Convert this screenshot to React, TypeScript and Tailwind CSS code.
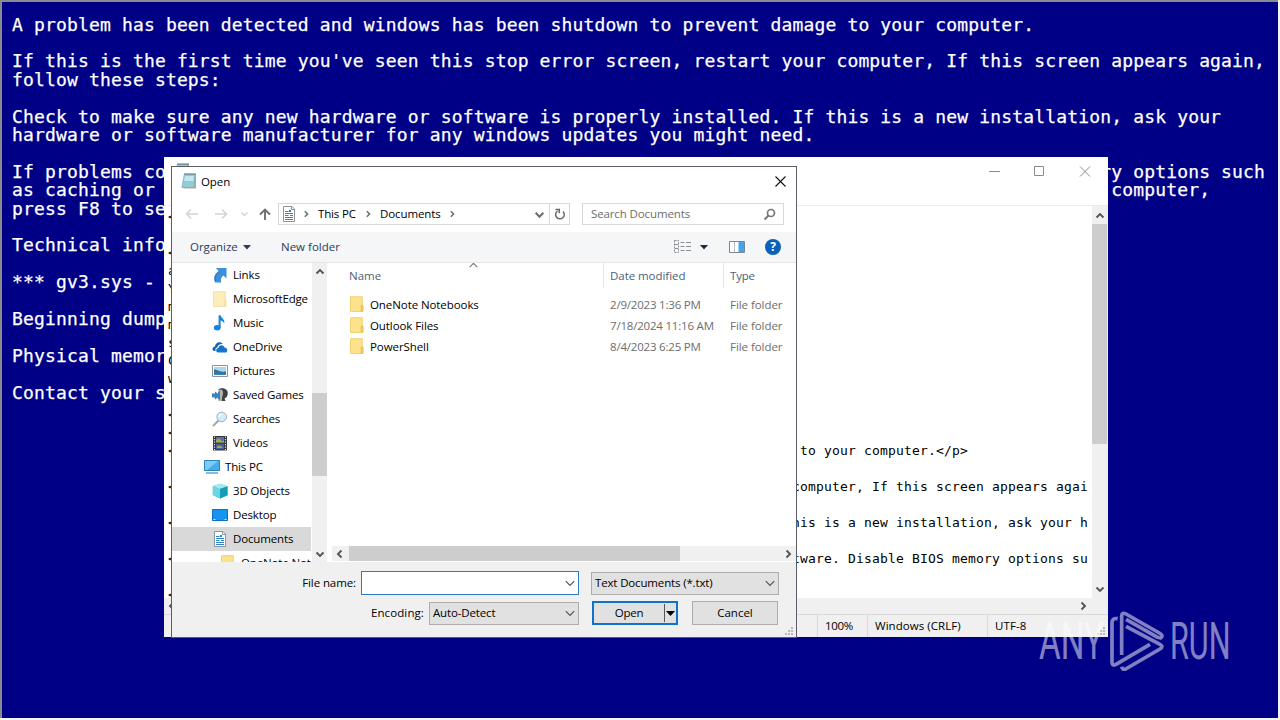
import type { ReactNode } from 'react';
import clsx from 'clsx';

const stopLines = [
  'A problem has been detected and windows has been shutdown to prevent damage to your computer.',
  '',
  "If this is the first time you've seen this stop error screen, restart your computer, If this screen appears again,",
  'follow these steps:',
  '',
  'Check to make sure any new hardware or software is properly installed. If this is a new installation, ask your',
  'hardware or software manufacturer for any windows updates you might need.',
  '',
  'If problems continue, disable or remove any newly installed hardware or software. Disable BIOS memory options such',
  'as caching or shadowing. If you need to use Safe Mode to remove or disable components, restart your computer,',
  'press F8 to select',
  '',
  'Technical infor',
  '',
  '*** gv3.sys - A',
  '',
  'Beginning dump ',
  '',
  'Physical memory',
  '',
  'Contact your sy',
];

const notepadLines = [
  '<',
  '',
  '<',
  'a',
  'Y',
  'm',
  'm',
  's',
  'C',
  'w',
  '',
  '<',
  '<',
  '<p>A problem has been detected and windows has been shutdown to prevent damage to your computer.</p>',
  '',
  "<p>If this is the first time you've seen this stop error screen, restart your computer, If this screen appears agai",
  '',
  '<p>Check to make sure any new hardware or software is properly installed. If this is a new installation, ask your h',
  '',
  '<p>If problems continue, disable or remove any newly installed hardware or software. Disable BIOS memory options su',
  '',
  '<',
];

type IconProps = { className?: string };

function Svg({ children, className, size = 16 }: IconProps & { children: ReactNode; size?: number }) {
  return (
    <svg width={size} height={size} viewBox="0 0 16 16" fill="none" className={clsx('shrink-0', className)}>
      {children}
    </svg>
  );
}

function NotepadIcon({ className }: IconProps) {
  return (
    <Svg className={className}>
      <path d="M4 1.5h11v14H2.500z" fill="#b9a98c" />
      <path d="M3.300 1.200h10.900L13 14.500H.8z" fill="#8fcbd8" stroke="#6fa9b6" strokeWidth=".6" />
      <path d="M4 3h8.800L12.200 8H3z" fill="#c3e8ee" />
      <path d="M3.500 1h11" stroke="#4c5f66" strokeWidth="1.600" strokeDasharray="1 1" />
    </Svg>
  );
}

function DocumentIcon() {
  return (
    <Svg>
      <path d="M2.500.5h8.500l2.500 2.500v12.500h-11z" fill="#fff" stroke="#8b959c" />
      <path d="M10.500.5V3.500h3" stroke="#8b959c" />
      <path d="M4 5.500h3.500M4 7.500h8M4 9.500h3.500M4 11.500h8M4 13.500h8" stroke="#2b87c8" />
      <path d="M8 4h2v2H8zM9 9h3v1H9z" fill="#2b87c8" />
    </Svg>
  );
}

function FolderIcon({ pale, className }: { pale?: boolean; className?: string }) {
  return (
    <Svg className={className}>
      <path d="M1.500.7h11.800v14.800H1.500z" fill={pale ? '#fbeebb' : '#fde28c'} stroke={pale ? '#eedc9e' : '#efca62'} strokeWidth=".8" />
      <path d="M12.200 9.200h1.900v6h-1.900z" fill={pale ? '#f8e6a5' : '#f7d36b'} stroke={pale ? '#eedc9e' : '#dfb348'} strokeWidth=".7" />
    </Svg>
  );
}

function LinkIcon() {
  return (
    <Svg>
      <path d="M4 1h10.500v10.500l-3-3C9 10 8.600 12 9.200 15.500H3.200C.8 11 2.500 7 6.600 4z" fill="#3d8edb" />
      <path d="M3.900 15C1.800 10.500 4 7 7.500 4.700" stroke="#2a6fb5" strokeWidth=".7" />
    </Svg>
  );
}

function MusicIcon() {
  return (
    <Svg>
      <ellipse cx="5.200" cy="12.800" rx="3.400" ry="2.700" fill="#1683de" />
      <path d="M6.600.3h2c.3 2.800 4.800 3.700 3.600 8.500-.6-2-1.800-2.800-3.600-3.200V13h-2z" fill="#1683de" />
    </Svg>
  );
}

function OneDriveIcon() {
  return (
    <Svg>
      <path d="M1 11.500c-1.300-2 .2-4 2-4C3.200 4 8 1.500 11 5.200 7.800 4.700 5.600 6.500 5.300 8.600c-1.900.4-2.200 2-1.600 3.400H2z" fill="#1567b8" />
      <path d="M4.700 12.900c-1.200-1.900.1-3.800 1.700-3.800.4-3.500 5.300-3.700 6-.6 2.900-.2 3.800 3.600 1.900 4.900H6z" fill="#1575cc" />
    </Svg>
  );
}

function PicturesIcon() {
  return (
    <Svg>
      <path d="M.5 2.500h15v11H.5z" fill="#fff" stroke="#8b9298" />
      <path d="M2 4h12v8H2z" fill="#a9d6f2" />
      <path d="M2 6.500c3 0 4 1.500 7 2s3 0 5 0V12H2z" fill="#3d6f91" />
      <path d="M2 10.500c4-1 7 1 12 0V12H2z" fill="#2b86c1" />
    </Svg>
  );
}

function GamesIcon() {
  return (
    <Svg>
      <path d="M6.500 2.500C9 .3 15.500 1 15.800 6c.2 3-1.800 5-3.300 5.500l1 2.500H6.500l2-4z" fill="#3b4142" />
      <path d="M7 3C9 1.500 11.500 3 11 6.500S9.500 11 10 14H6.600l1.700-4z" fill="#b3b5ad" />
      <path d="M0 6.500h3v-2l3 2.200V4.500h2v8H6v-2L3 12.500v-2H0z" fill="#3d82b8" />
    </Svg>
  );
}

function SearchIcon() {
  return (
    <Svg>
      <path d="M6.500 9.500L1.500 14.500" stroke="#a5a9ac" strokeWidth="2" strokeLinecap="round" />
      <circle cx="9.700" cy="5.900" r="4.800" fill="#d3ebf9" stroke="#9fb3c1" />
      <path d="M7 6c.3-2 1.500-2.700 3-2.700" stroke="#fff" strokeWidth="1.300" />
    </Svg>
  );
}

function VideosIcon() {
  return (
    <Svg>
      <path d="M1 1h14v14.500H1z" fill="#30343b" />
      <path d="M4 2h8v5.500H4z" fill="#5872a0" />
      <path d="M4 8.800h8v5.500H4z" fill="#4760a0" />
      <path d="M4 5l3-1.500 3 3 2-1v2H4zM5 11.500l3-1 3 2.500H5z" fill="#b5a64c" />
      <path d="M2.500 1.500v14M13.500 1.500v14" stroke="#e3e5e8" strokeWidth="1.200" strokeDasharray="1.300 1.200" />
    </Svg>
  );
}

function ComputerIcon() {
  return (
    <Svg>
      <path d="M.5 1.500h15v10H.5z" fill="#45aeea" stroke="#2784b7" />
      <path d="M1 2h13L3 11H1z" fill="#7ccbf5" />
      <path d="M2 14h12" stroke="#4797bd" strokeWidth="1.300" />
    </Svg>
  );
}

function CubeIcon() {
  return (
    <Svg>
      <path d="M8 .8l7.500 2.500v9L8 15.500.8 12V3.300z" fill="#2ab8d0" />
      <path d="M8 .8l7.500 2.500L8 6 .8 3.300z" fill="#a5e8ef" />
      <path d="M.8 3.300L8 6v9.500L.8 12z" fill="#6bd6df" />
      <path d="M8 6l7.500-2.700v9L8 15.500z" fill="#139eb7" />
    </Svg>
  );
}

function DesktopIcon() {
  return (
    <Svg>
      <path d="M.5 2.500h15v11H.5z" fill="#1594f0" stroke="#0d6fc1" />
      <path d="M1.500 12.500h2M12.500 12.500h2" stroke="#bfe3ff" />
    </Svg>
  );
}

type Direction = 'up' | 'down' | 'left' | 'right';

const chevrons: Record<Direction, string> = {
  up: 'M1.500 6.500L5 3l3.500 3.500',
  down: 'M1.500 3.500L5 7l3.500-3.500',
  left: 'M6.500 1.500L3 5l3.500 3.500',
  right: 'M3.500 1.500L7 5 3.500 8.500',
};

function Chevron({ dir, size = 10, width = 1.9, className = 'text-[#555]' }: { dir: Direction; size?: number; width?: number; className?: string }) {
  return (
    <svg width={size} height={size} viewBox="0 0 10 10" fill="none" className={clsx('shrink-0', className)}>
      <path d={chevrons[dir]} stroke="currentColor" strokeWidth={width} />
    </svg>
  );
}

function Grip() {
  return (
    <svg width="9" height="9" viewBox="0 0 9 9" fill="#b9b9b9" className="absolute bottom-px right-[2px]">
      <path d="M6 0h2v2H6zM3 3h2v2H3zM6 3h2v2H6zM0 6h2v2H0zM3 6h2v2H3zM6 6h2v2H6z" />
    </svg>
  );
}

const treeItems = [
  { label: 'Links', icon: <LinkIcon />, level: 1 },
  { label: 'MicrosoftEdge', icon: <FolderIcon pale />, level: 1 },
  { label: 'Music', icon: <MusicIcon />, level: 1 },
  { label: 'OneDrive', icon: <OneDriveIcon />, level: 1 },
  { label: 'Pictures', icon: <PicturesIcon />, level: 1 },
  { label: 'Saved Games', icon: <GamesIcon />, level: 1 },
  { label: 'Searches', icon: <SearchIcon />, level: 1 },
  { label: 'Videos', icon: <VideosIcon />, level: 1 },
  { label: 'This PC', icon: <ComputerIcon />, level: 0 },
  { label: '3D Objects', icon: <CubeIcon />, level: 1 },
  { label: 'Desktop', icon: <DesktopIcon />, level: 1 },
  { label: 'Documents', icon: <DocumentIcon />, level: 1, selected: true },
  { label: 'OneNote Notebooks', icon: <FolderIcon />, level: 2 },
];

const files = [
  { name: 'OneNote Notebooks', date: '2/9/2023 1:36 PM' },
  { name: 'Outlook Files', date: '7/18/2024 11:16 AM' },
  { name: 'PowerShell', date: '8/4/2023 6:25 PM' },
];

function NotepadWindow() {
  return (
    <div className="absolute left-[164px] top-[157px] flex h-[480px] w-[944px] flex-col bg-white">
      <div className="flex h-[48px] shrink-0 items-start justify-between">
        <NotepadIcon className="ml-[10px] mt-[6px]" />
        <svg width="110" height="28" viewBox="0 0 110 28" fill="none" stroke="#8b8b8b" className="mr-[9px]">
          <path d="M0 14.500h11M45.500 9.500h9v9h-9zM91 9.500l10 10M101 9.500l-10 10" />
        </svg>
      </div>
      <div className="flex min-h-0 flex-1 border-t border-[#ececec]">
        <div className="flex min-w-0 flex-1 flex-col">
          <pre className="h-[392px] overflow-hidden pl-[4px] pt-[1.5px] font-['DejaVu_Sans_Mono',monospace] text-[13px] leading-[18px] tracking-[0.174px] text-black">
            {notepadLines.join('\n')}
          </pre>
          <div className="flex flex-1 items-center justify-between bg-[#f0f0f0] pl-[3px] pr-[4px]">
            <Chevron dir="left" />
            <Chevron dir="right" />
          </div>
        </div>
        <div className="flex w-[16px] flex-col items-center bg-[#f0f0f0] pr-px">
          <div className="flex h-[18px] items-center pt-[2px]">
            <Chevron dir="up" />
          </div>
          <div className="h-[220px] w-[15px] bg-[#cdcdcd]" />
          <Chevron dir="down" className="mt-[140px] text-[#555]" />
        </div>
      </div>
      <div className="relative flex h-[23px] shrink-0 items-center justify-end border-t border-[#d9d9d9] bg-[#f0f0f0] text-[11.5px] text-black">
        <span className="flex h-full w-[50px] items-center border-l border-[#d9d9d9] pl-[7px] tracking-[-0.3px]">100%</span>
        <span className="flex h-full w-[120px] items-center border-l border-[#d9d9d9] pl-[7px] tracking-[0.05px]">Windows (CRLF)</span>
        <span className="flex h-full w-[121px] items-center border-l border-[#d9d9d9] pl-[7px] tracking-[0.1px]">UTF-8</span>
        <Grip />
      </div>
    </div>
  );
}

function AddressRow() {
  return (
    <div className="flex h-[22px] shrink-0 items-center">
      <svg width="106" height="22" viewBox="0 0 106 22" fill="none" className="shrink-0">
        <path d="M14 11h12M19 6.500L14.500 11l4.500 4.500M43 11h12M50 6.500l4.500 4.500-4.500 4.500M69.500 9.500l3 3 3-3" stroke="#d3d3d3" strokeWidth="1.500" />
        <path d="M93 17V6.500M88 11.500l5-5 5 5" stroke="#707070" strokeWidth="1.900" />
      </svg>
      <div className="flex h-[22px] w-[292px] items-center border border-[#d9d9d9] pl-[2px] text-black">
        <DocumentIcon />
        <Chevron dir="right" size={8} className="ml-[5px] text-[#6d6d6d]" />
        <span className="ml-[8px] w-[40px] tracking-[-0.15px]">This PC</span>
        <Chevron dir="right" size={8} className="ml-[6px] text-[#6d6d6d]" />
        <span className="ml-[8px] w-[63px] tracking-[-0.1px]">Documents</span>
        <Chevron dir="right" size={8} className="ml-[5px] text-[#6d6d6d]" />
        <Chevron dir="down" size={11} className="ml-auto mr-[4px] mt-px text-[#6d6d6d]" />
        <div className="flex h-full w-[20px] items-center justify-center border-l border-[#d9d9d9]">
          <svg width="14" height="14" viewBox="0 0 14 14" fill="none" stroke="#666" strokeWidth="1.500">
            <path d="M4.500 4A4.300 4.300 0 1 0 10 4.500" />
            <path d="M2.500 2.500h3.800v3.800" />
          </svg>
        </div>
      </div>
      <div className="ml-[12px] flex h-[22px] w-[202px] items-center justify-between border border-[#d9d9d9] pl-[8px] pr-[7px] text-[#6d6d6d]">
        <span className="tracking-[-0.12px]">Search Documents</span>
        <svg width="13" height="13" viewBox="0 0 13 13" fill="none" stroke="#777" strokeWidth="1.700">
          <circle cx="8" cy="5" r="3.500" />
          <path d="M5.500 7.500L1.500 11.500" strokeWidth="2" />
        </svg>
      </div>
    </div>
  );
}

function Toolbar() {
  return (
    <div className="mt-[7px] flex h-[31px] shrink-0 items-center border-b border-[#e6e6e6] bg-[#f5f6f7] pl-[18px] text-[#2c3b58]">
      <span className="w-[48px] tracking-[-0.05px]">Organize</span>
      <svg width="8" height="5" viewBox="0 0 8 5" className="ml-[5px]">
        <path d="M0 0h8L4 4.500z" fill="#2c3b58" />
      </svg>
      <span className="ml-[30px]">New folder</span>
      <div className="ml-auto flex items-center pr-[15px]">
        <svg width="17" height="14" viewBox="0 0 17 14" fill="none" stroke="#8a8f94">
          <path d="M.5.500h4v12h-4z" strokeDasharray="2 1" />
          <path d="M1 4.500h3M1 8.500h3M6.500 2.500h4M12 2.500h5M6.500 6.500h4M12 6.500h5M6.500 10.500h4M12 10.500h5" />
        </svg>
        <svg width="8" height="5" viewBox="0 0 8 5" className="ml-[9px]">
          <path d="M0 0h8L4 4.500z" fill="#1f2a3f" />
        </svg>
        <svg width="16" height="12" viewBox="0 0 16 12" className="ml-[21px]">
          <path d="M.5.500h15v11H.5z" fill="#fff" stroke="#7c8791" />
          <path d="M5.500 1v10" stroke="#b8bec4" />
          <path d="M9.500 1H15v10H9.500z" fill="#42a5f0" />
        </svg>
        <span className="ml-[20px] flex size-[16px] items-center justify-center rounded-full bg-[#0a62b8] text-[12px] font-bold leading-none text-white">
          ?
        </span>
      </div>
    </div>
  );
}

function FolderTree() {
  return (
    <div className="flex w-[155px] shrink-0">
      <ul className="w-[139px] overflow-hidden">
        {treeItems.map(item => (
          <li
            key={item.label}
            className={clsx(
              'flex h-[24px] items-center gap-[5px] whitespace-nowrap tracking-[-0.15px] text-black',
              item.level === 0 && 'pl-[32px]',
              item.level === 1 && 'pl-[40px]',
              item.level === 2 && 'pl-[48px]',
              item.selected && 'bg-[#d9d9d9]'
            )}
          >
            {item.icon}
            {item.label}
          </li>
        ))}
      </ul>
      <div className="ml-px flex w-[15px] flex-col items-center bg-[#f0f0f0]">
        <Chevron dir="up" className="mt-[4px] text-[#555]" />
        <div className="mt-[116px] h-[83px] w-full bg-[#cdcdcd]" />
        <Chevron dir="down" className="mt-[73px] text-[#555]" />
      </div>
    </div>
  );
}

function FileList() {
  return (
    <div className="flex flex-1 flex-col pl-[5px]">
      <div className="relative flex h-[25px] text-[#4c607a]">
        <span className="w-[271px] pl-[17px] pt-[5px]">Name</span>
        <span className="w-[120px] border-l border-[#e5e5e5] pl-[6px] pt-[5px] tracking-[-0.05px]">Date modified</span>
        <span className="flex-1 border-l border-[#e5e5e5] pl-[6px] pt-[5px] tracking-[-0.2px]">Type</span>
        <Chevron dir="up" size={11} width={1} className="absolute left-[136px] top-[-3px] text-[#777]" />
      </div>
      <div className="mt-[6px] flex-1">
        {files.map(f => (
          <div key={f.name} className="flex h-[21px] items-center text-[#6d6d6d]">
            <div className="flex w-[278px] items-center gap-[4px] pl-[18px] tracking-[-0.08px] text-black">
              <FolderIcon className="relative right-px bottom-px" />
              {f.name}
            </div>
            <span className="w-[120px] whitespace-nowrap tracking-[-0.2px]">{f.date}</span>
            <span className="tracking-[-0.05px]">File folder</span>
          </div>
        ))}
      </div>
      <div className="mb-px flex h-[15px] items-center bg-[#f0f0f0] pl-[3px] pr-[3px]">
        <Chevron dir="left" />
        <div className="ml-[4px] h-full w-[331px] bg-[#cdcdcd]" />
        <Chevron dir="right" className="ml-auto text-[#555]" />
      </div>
    </div>
  );
}

function Select({ value, className }: { value: string; className: string }) {
  return (
    <div className={clsx('flex h-[23px] items-center justify-between border border-[#adadad] bg-[#e1e1e1] pl-[3px] pr-[2px]', className)}>
      <span className="tracking-[-0.15px]">{value}</span>
      <Chevron dir="down" size={12} width={1} />
    </div>
  );
}

function DialogFooter() {
  return (
    <div className="relative flex h-[75px] shrink-0 flex-col gap-[6px] bg-[#f0f0f0] pt-[9px] text-black">
      <div className="flex h-[24px] items-center">
        <span className="w-[184px] text-right tracking-[-0.1px]">File name:</span>
        <div className="ml-[5px] flex h-[24px] w-[218px] items-center justify-end border border-[#2a7cc0] bg-white pr-[2px]">
          <Chevron dir="down" size={12} width={1} />
        </div>
        <Select value="Text Documents (*.txt)" className="ml-[12px] w-[188px]" />
      </div>
      <div className="flex h-[24px] items-center">
        <span className="w-[252px] text-right tracking-[0.1px]">Encoding:</span>
        <Select value="Auto-Detect" className="ml-[5px] w-[150px]" />
        <div className="ml-[13px] flex h-[24px] w-[86px] items-center border-2 border-[#0f74c9] bg-[#e1e1e1]">
          <span className="flex-1 text-center tracking-[-0.2px]">Open</span>
          <span className="flex h-[18px] items-center border-l border-[#555] px-[1px]">
            <svg width="9" height="5" viewBox="0 0 9 5">
              <path d="M0 0h9L4.500 5z" fill="#000" />
            </svg>
          </span>
        </div>
        <div className="ml-[14px] flex h-[24px] w-[86px] items-center justify-center border border-[#adadad] bg-[#e1e1e1]">
          Cancel
        </div>
      </div>
      <Grip />
    </div>
  );
}

function OpenDialog() {
  return (
    <div className="absolute left-[171px] top-[166px] flex h-[472px] w-[626px] flex-col border border-[#5c5c66] bg-white text-[11.5px] leading-[16px]">
      <div className="flex h-[36px] shrink-0 items-start pl-[9px] pr-[10px] pt-[6px] text-black">
        <NotepadIcon />
        <span className="ml-[4px] mt-px tracking-[-0.1px]">Open</span>
        <svg width="11" height="11" viewBox="0 0 11 11" fill="none" stroke="#111" strokeWidth="1.100" className="ml-auto mt-[3px]">
          <path d="M.5.500l10 10M10.500.500l-10 10" />
        </svg>
      </div>
      <AddressRow />
      <Toolbar />
      <div className="flex min-h-0 flex-1 overflow-hidden">
        <FolderTree />
        <FileList />
      </div>
      <DialogFooter />
    </div>
  );
}

function Watermark() {
  return (
    <div className="absolute left-[1039px] top-[610px] flex h-[62px] items-center font-['Roboto',sans-serif] text-[51px] font-normal leading-none text-white opacity-50">
      <span className="w-[71px] origin-left scale-x-[0.65]">ANY</span>
      <svg width="54" height="60" viewBox="270 92 162 180" fill="none" stroke="currentColor" strokeWidth="11" strokeLinejoin="round" className="shrink-0">
        <path d="M293 115q-17-3-17 12v119q0 12 12 6l102-60" />
        <path d="M305 224V108q0-14 13-7l100 57q14 8 4 15l-9-2-95-54" />
        <path d="M318 138l102 54q12 6 0 14l-103 60q-9 4-12-7" />
      </svg>
      <span className="ml-[6px] origin-left scale-x-[0.6]">RUN</span>
    </div>
  );
}

export default function App() {
  return (
    <div className="relative h-[720px] w-[1280px] overflow-hidden bg-[#f4f4fb] font-['Open_Sans',sans-serif]">
      <div className="h-[718px] w-[1278px] overflow-hidden border-l-2 border-t-2 border-[#8b8b8b] bg-[#000086] pl-[10px] pt-[13.6px]">
        <pre className="font-['DejaVu_Sans_Mono',monospace] text-[18px] leading-[18.4px] tracking-[0.155px] text-white [-webkit-text-stroke:0.25px_white]">
          {stopLines.join('\n')}
        </pre>
      </div>
      <NotepadWindow />
      <OpenDialog />
      <Watermark />
    </div>
  );
}
